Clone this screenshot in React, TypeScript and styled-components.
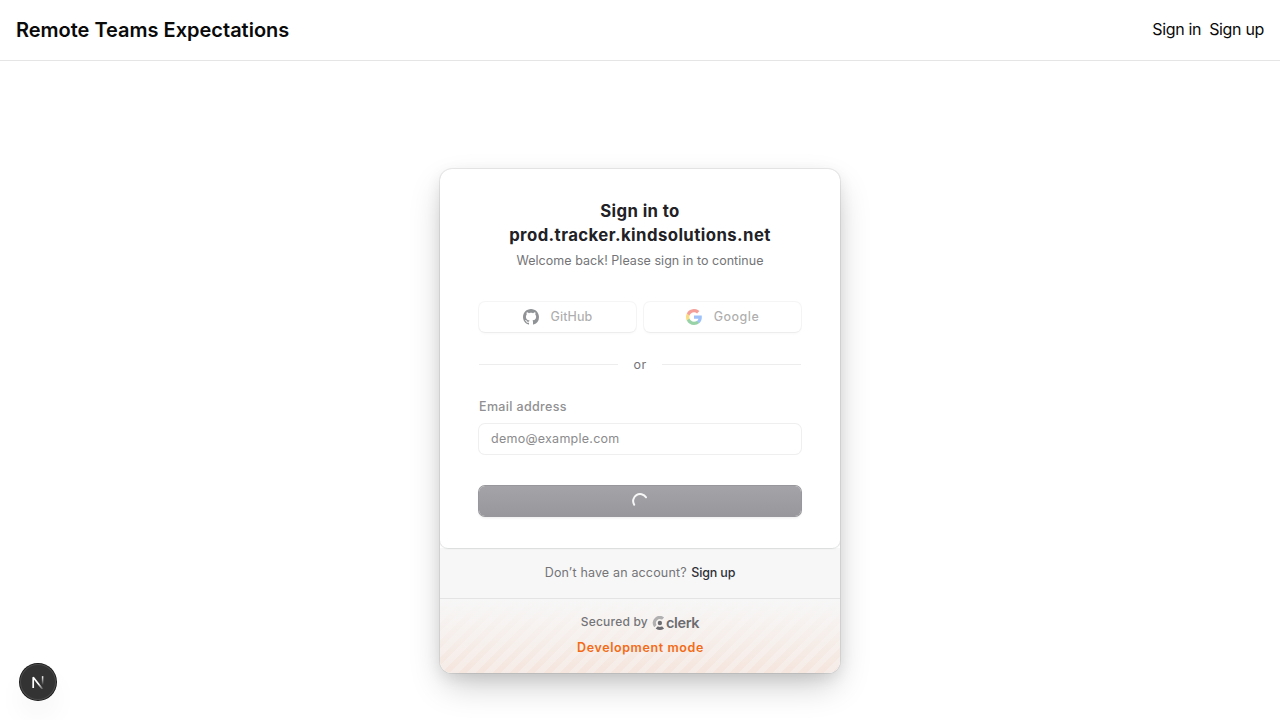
import React from 'react';
import styled, { createGlobalStyle } from 'styled-components';

const GlobalStyle = createGlobalStyle`
  *, *::before, *::after { box-sizing: border-box; }
  body {
    margin: 0;
    background: #fff;
    color: #0a0a0a;
    font-family: Inter, "Liberation Sans", sans-serif;
  }
  h1, p { margin: 0; }
  a { color: inherit; text-decoration: none; }
`;

const Page = styled.div`
  height: 720px;
  display: flex;
  flex-direction: column;
  overflow: hidden;
`;

const Header = styled.header`
  height: 61px;
  flex: none;
  display: flex;
  align-items: center;
  justify-content: space-between;
  padding: 0 16px;
  border-bottom: 1px solid #e5e5e5;
`;

const Brand = styled.div`
  font-size: 20px;
  line-height: 28px;
  font-weight: 600;
  letter-spacing: -0.01px;
`;

const Nav = styled.nav`
  display: flex;
  gap: 8px;
  padding-bottom: 2px;
  font-size: 16px;
  line-height: 24px;
  letter-spacing: -0.33px;
`;

const Main = styled.main`
  flex: 1;
  display: flex;
  justify-content: center;
  align-items: flex-start;
  padding-top: 108px;
`;

const CardShell = styled.section`
  width: 400px;
  height: 504px;
  border-radius: 12px;
  background: #fff;
  overflow: hidden;
  box-shadow:
    0 5px 15px rgba(0, 0, 0, 0.08),
    0 15px 35px -5px rgba(0, 0, 0, 0.23),
    0 0 0 1px rgba(0, 0, 0, 0.07);
`;

const Card = styled.div`
  position: relative;
  height: 379px;
  padding: 30px 39px 0;
  display: flex;
  flex-direction: column;
  background: #fff;
  border-radius: 12px 12px 8px 8px;
  box-shadow:
    0 0 2px rgba(0, 0, 0, 0.08),
    0 1px 2px rgba(25, 28, 33, 0.06),
    0 0 0 1px rgba(0, 0, 0, 0.04);
`;

const Title = styled.h1`
  font-size: 16.75px;
  line-height: 24px;
  font-weight: 700;
  text-align: center;
  color: #212126;
`;

const Subtitle = styled.p`
  margin-top: 5px;
  font-size: 12.5px;
  line-height: 18px;
  text-align: center;
  color: #747477;
`;

const SocialRow = styled.div`
  margin-top: 32px;
  display: grid;
  grid-template-columns: 1fr 1fr;
  gap: 8px;
`;

const SocialButton = styled.button`
  height: 30px;
  padding: 0;
  border: 0;
  border-radius: 6px;
  background: #fff;
  display: flex;
  align-items: center;
  justify-content: center;
  gap: 12px;
  font: 500 12.5px/18px Inter, sans-serif;
  color: rgba(0, 0, 0, 0.65);
  opacity: 0.5;
  box-shadow:
    0 0 0 1px rgba(0, 0, 0, 0.07),
    0 2px 3px -1px rgba(0, 0, 0, 0.08),
    0 1px 0 rgba(0, 0, 0, 0.02);
`;

const Label = styled.span<{ $spacing: number }>`
  letter-spacing: ${(p) => p.$spacing}px;
`;

const Divider = styled.div`
  margin-top: 24px;
  display: flex;
  align-items: center;
  gap: 15.5px;
  font-size: 12.5px;
  line-height: 18px;
  letter-spacing: 0.3px;
  color: #747477;
  &::before, &::after {
    content: '';
    flex: 1;
    height: 1px;
    margin-bottom: 1px;
    background: #ededed;
  }
`;

const FieldLabel = styled.label`
  margin-top: 24px;
  font-size: 12.5px;
  line-height: 18px;
  font-weight: 500;
  color: #909092;
`;

const Input = styled.input`
  margin-top: 8px;
  height: 30px;
  width: 100%;
  padding: 0 12px 2px;
  border: 0;
  outline: 0;
  border-radius: 6px;
  background: #fff;
  font: 400 12.5px/18px Inter, sans-serif;
  letter-spacing: 0.26px;
  box-shadow: 0 0 0 1px #efefef, 0 1px 1px rgba(0, 0, 0, 0.03);
  &::placeholder { color: #8b8b8d; opacity: 1; }
`;

const SubmitButton = styled.button`
  margin-top: 32px;
  height: 30px;
  padding: 0 0 1px;
  border: 0;
  border-radius: 6px;
  display: flex;
  align-items: center;
  justify-content: center;
  background: linear-gradient(180deg, #a4a4a8, #97979c);
  box-shadow:
    0 0 0 1px #97979c,
    0 2px 3px rgba(0, 0, 0, 0.08);
`;

const Footer = styled.footer`
  background: #f7f7f7;
`;

const SignUpRow = styled.div`
  height: 51px;
  padding-bottom: 1px;
  display: flex;
  align-items: center;
  justify-content: center;
  gap: 4.5px;
  border-bottom: 1px solid #e4e4e4;
  font-size: 12.5px;
  line-height: 18px;
  color: #747477;
`;

const SignUpLink = styled.a`
  font-weight: 500;
  letter-spacing: -0.15px;
  color: #2f3037;
`;

const DevPanel = styled.div`
  height: 74px;
  padding-top: 14px;
  display: flex;
  flex-direction: column;
  align-items: center;
  background:
    linear-gradient(180deg, #f7f7f7, rgba(247, 247, 247, 0)),
    repeating-linear-gradient(-45deg, #f5e6de 0 6px, #f6ece7 6px 12px);
`;

const Secured = styled.div`
  height: 18px;
  display: flex;
  align-items: center;
  gap: 4px;
  font-size: 12px;
  line-height: 18px;
  font-weight: 500;
  color: #747477;
`;

const ClerkLogo = styled.span`
  display: flex;
  align-items: center;
  padding-top: 1px;
  color: #6c6c70;
`;

const ClerkName = styled.span`
  margin-left: 1px;
  font-size: 14.5px;
  line-height: 16px;
  font-weight: 600;
  letter-spacing: -0.35px;
`;

const DevMode = styled.p`
  margin-top: 8px;
  padding-left: 1px;
  font-size: 12.5px;
  line-height: 18px;
  font-weight: 600;
  letter-spacing: 0.6px;
  color: #f36b16;
`;

const DevBadge = styled.div`
  position: absolute;
  left: 20px;
  top: 664px;
  width: 36px;
  height: 36px;
  border-radius: 50%;
  background: #333;
  display: flex;
  align-items: center;
  justify-content: center;
  box-shadow:
    0 0 0 1px #171717,
    inset 0 0 0 1px #4a4a4a,
    0 16px 32px -8px rgba(0, 0, 0, 0.14);
`;

const GithubIcon = () => (
  <svg width="16" height="16" viewBox="0 0 16 16" fill="#24292f">
    <path d="M8 0C3.58 0 0 3.58 0 8c0 3.54 2.29 6.53 5.47 7.59.4.07.55-.17.55-.38 0-.19-.01-.82-.01-1.49-2.01.37-2.53-.49-2.69-.94-.09-.23-.48-.94-.82-1.13-.28-.15-.68-.52-.01-.53.63-.01 1.08.58 1.23.82.72 1.21 1.87.87 2.33.66.07-.52.28-.87.51-1.07-1.78-.2-3.64-.89-3.64-3.95 0-.87.31-1.59.82-2.15-.08-.2-.36-1.02.08-2.12 0 0 .67-.21 2.2.82.64-.18 1.32-.27 2-.27s1.36.09 2 .27c1.53-1.04 2.2-.82 2.2-.82.44 1.1.16 1.92.08 2.12.51.56.82 1.27.82 2.15 0 3.07-1.87 3.75-3.65 3.95.29.25.54.73.54 1.48 0 1.07-.01 1.93-.01 2.2 0 .21.15.46.55.38A8.01 8.01 0 0 0 16 8c0-4.42-3.58-8-8-8Z" />
  </svg>
);

const GoogleIcon = () => (
  <svg width="16" height="16" viewBox="0 0 24 24">
    <path fill="#4285F4" d="M23.75 12.27c0-.85-.08-1.67-.22-2.45H12v4.64h6.59a5.64 5.64 0 0 1-2.44 3.7v3.01h3.87c2.38-2.19 3.73-5.42 3.73-8.9Z" />
    <path fill="#34A853" d="M12 24c3.24 0 5.96-1.07 7.95-2.91l-3.88-3.01c-1.07.72-2.45 1.15-4.07 1.15-3.13 0-5.78-2.11-6.73-4.96H1.27v3.11A12 12 0 0 0 12 24Z" />
    <path fill="#FBBC05" d="M5.27 14.28A7.2 7.2 0 0 1 4.89 12c0-.79.14-1.56.38-2.28V6.61h-4A12 12 0 0 0 0 12c0 1.94.46 3.77 1.28 5.39l3.99-3.11Z" />
    <path fill="#EA4335" d="M12 4.77c1.76 0 3.34.61 4.59 1.8l3.44-3.44A11.97 11.97 0 0 0 1.27 6.61l4 3.11C6.22 6.88 8.87 4.77 12 4.77Z" />
  </svg>
);

const Spinner = () => (
  <svg width="16" height="16" viewBox="0 0 16 16" fill="none">
    <path d="M2.2 11.7A6.8 6.8 0 0 1 14 4.3" stroke="#f7f7f8" strokeWidth="2" strokeLinecap="round" />
  </svg>
);

const ClerkMark = () => (
  <svg width="13" height="14" viewBox="0 0 13 14" fill="currentColor">
    <circle cx="7.89" cy="7" r="2.19" />
    <path d="M11.83 12.18a.415.415 0 0 1-.05.64A6.97 6.97 0 0 1 7.89 14a6.97 6.97 0 0 1-3.89-1.18.415.415 0 0 1-.05-.64l1.6-1.6a.473.473 0 0 1 .55-.074 3.92 3.92 0 0 0 1.79.431 3.92 3.92 0 0 0 1.79-.43.473.473 0 0 1 .55.074l1.6 1.6Z" />
    <path opacity=".5" d="M11.83 1.82a.415.415 0 0 0-.05-.64 7 7 0 0 0-9.72 9.72.415.415 0 0 0 .64.051l1.6-1.6a.473.473 0 0 0 .074-.55 3.937 3.937 0 0 1 5.31-5.31.473.473 0 0 0 .55-.074l1.6-1.6Z" />
  </svg>
);

const NextMark = () => (
  <svg width="14" height="14" viewBox="0 0 14 14" fill="none">
    <defs>
      <linearGradient id="diag" x1="8" y1="8.5" x2="12.5" y2="14" gradientUnits="userSpaceOnUse">
        <stop stopColor="#fff" />
        <stop offset="1" stopColor="#fff" stopOpacity="0.1" />
      </linearGradient>
      <linearGradient id="stem" x1="11" y1="1" x2="11" y2="10" gradientUnits="userSpaceOnUse">
        <stop stopColor="#fff" />
        <stop offset="1" stopColor="#fff" stopOpacity="0" />
      </linearGradient>
    </defs>
    <path d="M2.2 13V2.2l9.4 12" stroke="url(#diag)" strokeWidth="1.7" strokeLinejoin="bevel" />
    <path d="M11.6 1.2V10.5" stroke="url(#stem)" strokeWidth="1.5" />
  </svg>
);

export default function App() {
  return (
    <Page>
      <GlobalStyle />
      <Header>
        <Brand>Remote Teams Expectations</Brand>
        <Nav>
          <a href="#sign-in">Sign in</a>
          <a href="#sign-up">Sign up</a>
        </Nav>
      </Header>
      <Main>
        <CardShell>
          <Card>
            <Title>
              <Label $spacing={0.38}>Sign in to</Label>
              <br />
              <Label $spacing={0.42}>prod.tracker.kindsolutions.net</Label>
            </Title>
            <Subtitle>
              <Label $spacing={0.04}>Welcome back! Please sign in to continue</Label>
            </Subtitle>
            <SocialRow>
              <SocialButton>
                <GithubIcon />
                <Label $spacing={0.1}>GitHub</Label>
              </SocialButton>
              <SocialButton>
                <GoogleIcon />
                <Label $spacing={0.5}>Google</Label>
              </SocialButton>
            </SocialRow>
            <Divider>or</Divider>
            <FieldLabel htmlFor="email">
              <Label $spacing={0.35}>Email address</Label>
            </FieldLabel>
            <Input id="email" placeholder="demo@example.com" />
            <SubmitButton aria-label="Continue">
              <Spinner />
            </SubmitButton>
          </Card>
          <Footer>
            <SignUpRow>
              <Label $spacing={0.16}>Don’t have an account?</Label>
              <SignUpLink href="#sign-up">Sign up</SignUpLink>
            </SignUpRow>
            <DevPanel>
              <Secured>
                <Label $spacing={0.2}>Secured by</Label>
                <ClerkLogo>
                  <ClerkMark />
                  <ClerkName>clerk</ClerkName>
                </ClerkLogo>
              </Secured>
              <DevMode>Development mode</DevMode>
            </DevPanel>
          </Footer>
        </CardShell>
      </Main>
      <DevBadge>
        <NextMark />
      </DevBadge>
    </Page>
  );
}
